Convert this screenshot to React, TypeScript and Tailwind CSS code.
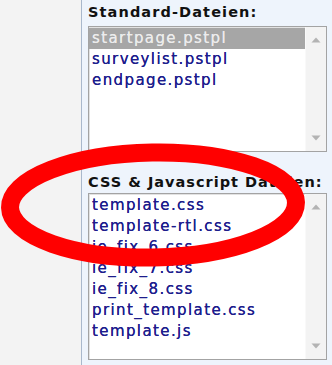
const standardFiles = ["startpage.pstpl", "surveylist.pstpl", "endpage.pstpl"];

const scriptFiles = [
  "template.css",
  "template-rtl.css",
  "ie_fix_6.css",
  "ie_fix_7.css",
  "ie_fix_8.css",
  "print_template.css",
  "template.js",
];

const ScrollBar = () => (
  <div className="flex w-[21px] flex-col items-center justify-between border-l border-[#f9f9f9] bg-[#f3f3f3] py-[10px]">
    <svg width="10" height="6" viewBox="0 0 10 6">
      <path d="M5 0.5 L9.5 5.5 L0.5 5.5 Z" fill="#b3b3b3" />
    </svg>
    <svg width="10" height="6" viewBox="0 0 10 6">
      <path d="M0.5 0.5 L9.5 0.5 L5 5.5 Z" fill="#b3b3b3" />
    </svg>
  </div>
);

const FileList = ({
  files,
  selected,
  height,
}: {
  files: string[];
  selected?: number;
  height: string;
}) => (
  <div
    className={`flex border border-[#a3a3a3] bg-white shadow-[inset_1px_1px_0_#e2e2e2] ${height}`}
  >
    <ul className="flex-1 pt-px">
      {files.map((f, i) => (
        <li
          key={f}
          className={`h-[21px] pl-[3px] text-[15px] leading-[21px] tracking-[1.4px] [text-shadow:0_0_0.6px_currentColor] ${
            i === selected ? "bg-[#a6a6a6] text-[#ececec]" : "text-[#1d1d8c]"
          }`}
        >
          {f}
        </li>
      ))}
    </ul>
    <ScrollBar />
  </div>
);

export default function App() {
  return (
    <div
      className="relative flex h-[365px] w-[332px] overflow-hidden"
      style={{ fontFamily: '"DejaVu Sans", Verdana, sans-serif' }}
    >
      <div className="w-[81px] bg-[#f3f3f3]" />
      <div className="w-px bg-[#a9b8cc]" />
      <div className="flex flex-1 flex-col bg-[#eef4fc] pl-[6px] pr-[5px] pt-[3px]">
        <h3 className="mb-[5px] text-[14.5px] font-bold leading-[18px] tracking-[1.1px] text-[#111]">
          Standard-Dateien:
        </h3>
        <FileList files={standardFiles} selected={0} height="h-[126px]" />
        <h3 className="mt-[21px] mb-[2px] text-[14.5px] font-bold leading-[18px] tracking-[1px] text-[#111]">
          CSS &amp; Javascript Dateien:
        </h3>
        <FileList files={scriptFiles} height="h-[167px]" />
      </div>

      {/* red marker circle */}
      <svg className="pointer-events-none absolute inset-0" width="332" height="365">
        <ellipse
          cx="153"
          cy="205"
          rx="143"
          ry="52.5"
          fill="none"
          stroke="#ff0000"
          strokeWidth="18"
          transform="rotate(-1 153 205)"
        />
      </svg>
    </div>
  );
}
